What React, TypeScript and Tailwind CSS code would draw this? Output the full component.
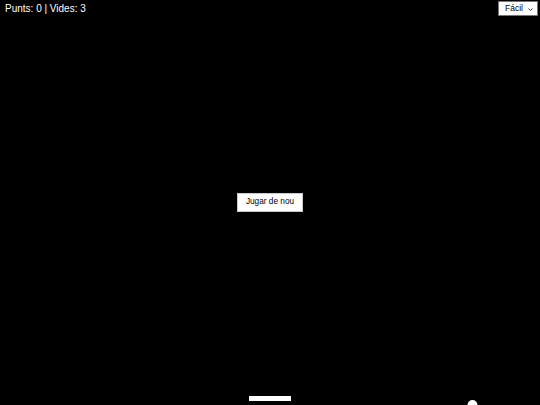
import { useState } from "react";

export default function App() {
  const [level, setLevel] = useState("facil");

  return (
    <div className="relative h-screen w-full overflow-hidden bg-black font-['Liberation_Sans',Arial,sans-serif]">
      {/* game field */}
      <svg className="absolute inset-0 h-full w-full" viewBox="0 0 540 405">
        <rect x="249" y="396" width="42" height="5" fill="#fff" />
        <circle cx="472.5" cy="405" r="5" fill="#fff" />
      </svg>

      <div className="relative flex items-start justify-between">
        <div className="pl-[5px] pt-[3px] text-[10px] leading-[12px] text-white">
          Punts: 0 | Vides: 3
        </div>
        <div className="relative mr-[2px] mt-[1px]">
          <select
            value={level}
            onChange={(e) => setLevel(e.target.value)}
            className="block h-[15px] w-[40px] appearance-none rounded-none border border-[#767676] bg-white pl-[6px] text-[8.5px] leading-[13px] text-black outline-none"
          >
            <option value="facil">Fácil</option>
            <option value="mitja">Mitjà</option>
            <option value="dificil">Difícil</option>
          </select>
          <svg
            className="pointer-events-none absolute right-[5px] top-[7px]"
            width="5"
            height="3"
            viewBox="0 0 5 3"
          >
            <path d="M0.5 0.5 L2.5 2.5 L4.5 0.5" fill="none" stroke="#333" strokeWidth="1" />
          </svg>
        </div>
      </div>

      <button className="absolute left-[237px] top-[193px] h-[19px] w-[66px] border border-[#c8c8c8] bg-white text-[8.25px] text-black">
        Jugar de nou
      </button>
    </div>
  );
}
